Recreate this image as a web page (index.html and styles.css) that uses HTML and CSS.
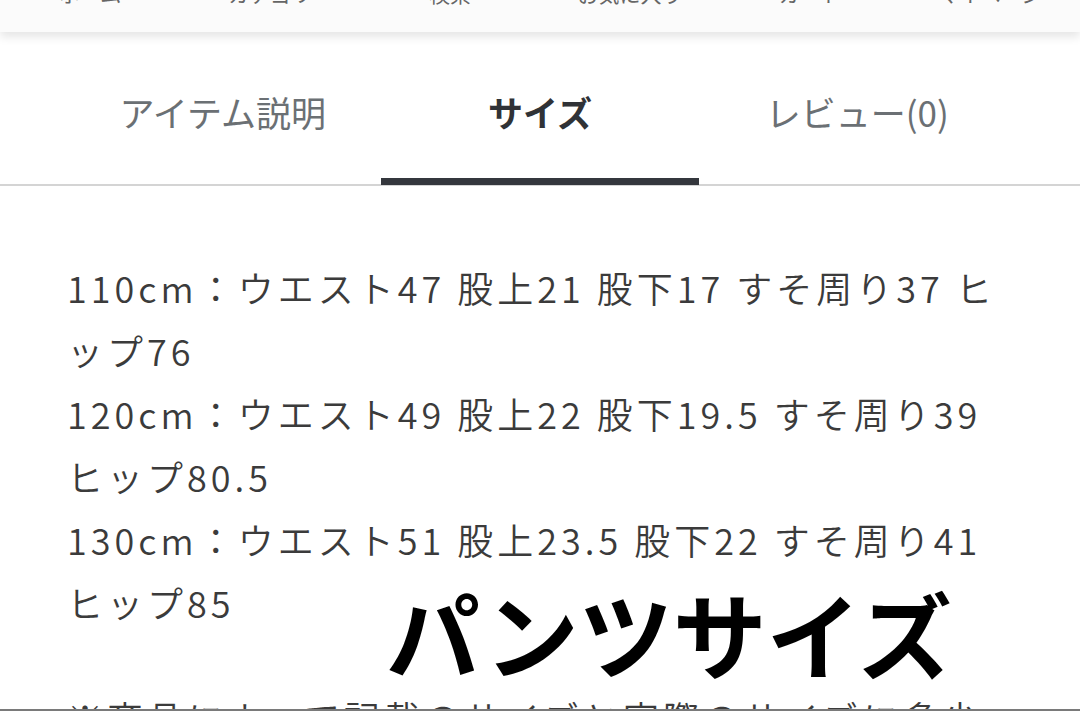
FILE: index.html
```html
<!DOCTYPE html>
<html lang="ja">
<head>
<meta charset="utf-8">
<title>サイズ</title>
<link rel="stylesheet" href="styles.css">
</head>
<body>
<div class="page">
  <header class="topbar">
    <nav class="nav">
      <span class="nav-item">ホーム</span>
      <span class="nav-item">カテゴリ</span>
      <span class="nav-item">検索</span>
      <span class="nav-item">お気に入り</span>
      <span class="nav-item">カート</span>
      <span class="nav-item">マイページ</span>
    </nav>
  </header>

  <div class="tabs">
    <div class="tab-list">
      <div class="tab">アイテム説明</div>
      <div class="tab active">サイズ</div>
      <div class="tab">レビュー(0)</div>
    </div>
  </div>

  <section class="content">
    <p class="size-line">110cm：ウエスト47 股上21 股下17 すそ周り37 ヒップ76</p>
    <p class="size-line">120cm：ウエスト49 股上22 股下19.5 すそ周り39 ヒップ80.5</p>
    <p class="size-line">130cm：ウエスト51 股上23.5 股下22 すそ周り41 ヒップ85</p>
    <p class="note">※商品によって記載のサイズと実際のサイズに多少の誤差が生じる場合がございます。</p>
    <div class="caption">パンツサイズ</div>
  </section>
</div>
</body>
</html>
```

FILE: styles.css
```css
html, body {
  margin: 0;
  padding: 0;
  background: #ffffff;
}

body {
  font-family: "Noto Sans CJK JP", "Noto Sans", sans-serif;
  color: #3a3a3a;
}

.page {
  position: relative;
  height: 711px;
  overflow: hidden;
  box-sizing: border-box;
  border-bottom: 2px solid #7a7a7a;
}

.topbar {
  position: relative;
  z-index: 2;
  height: 32px;
  background: #fbfbfb;
  box-shadow: 0 5px 10px rgba(0, 0, 0, 0.10);
  overflow: hidden;
}

.nav {
  display: grid;
  grid-template-columns: repeat(6, 1fr);
  margin-top: -17px;
}

.nav-item {
  text-align: center;
  font-size: 21px;
  line-height: 21px;
  color: #666;
}

.tabs {
  border-bottom: 2px solid #d4d4d4;
}

.tab-list {
  display: grid;
  grid-template-columns: repeat(3, 1fr);
  margin: 0 64px;
}

.tab {
  position: relative;
  box-sizing: border-box;
  height: 152px;
  padding-top: 6px;
  display: flex;
  align-items: center;
  justify-content: center;
  font-size: 35px;
  color: #6b7074;
}

.tab.active {
  color: #303236;
  font-weight: 700;
}

.tab.active::after {
  content: "";
  position: absolute;
  left: 0;
  right: 0;
  bottom: -1px;
  height: 7px;
  background: #34373d;
}

.content {
  padding: 70px 67px 0 67px;
}

.size-line,
.note {
  margin: 0;
  font-size: 36px;
  line-height: 63px;
  letter-spacing: 4px;
  font-weight: 350;
  color: #3b3b3b;
}

.note {
  margin-top: 52px;
}

.caption {
  position: absolute;
  left: 386px;
  top: 585px;
  font-size: 94px;
  line-height: 1;
  font-weight: 700;
  color: #000;
  white-space: nowrap;
}
```
